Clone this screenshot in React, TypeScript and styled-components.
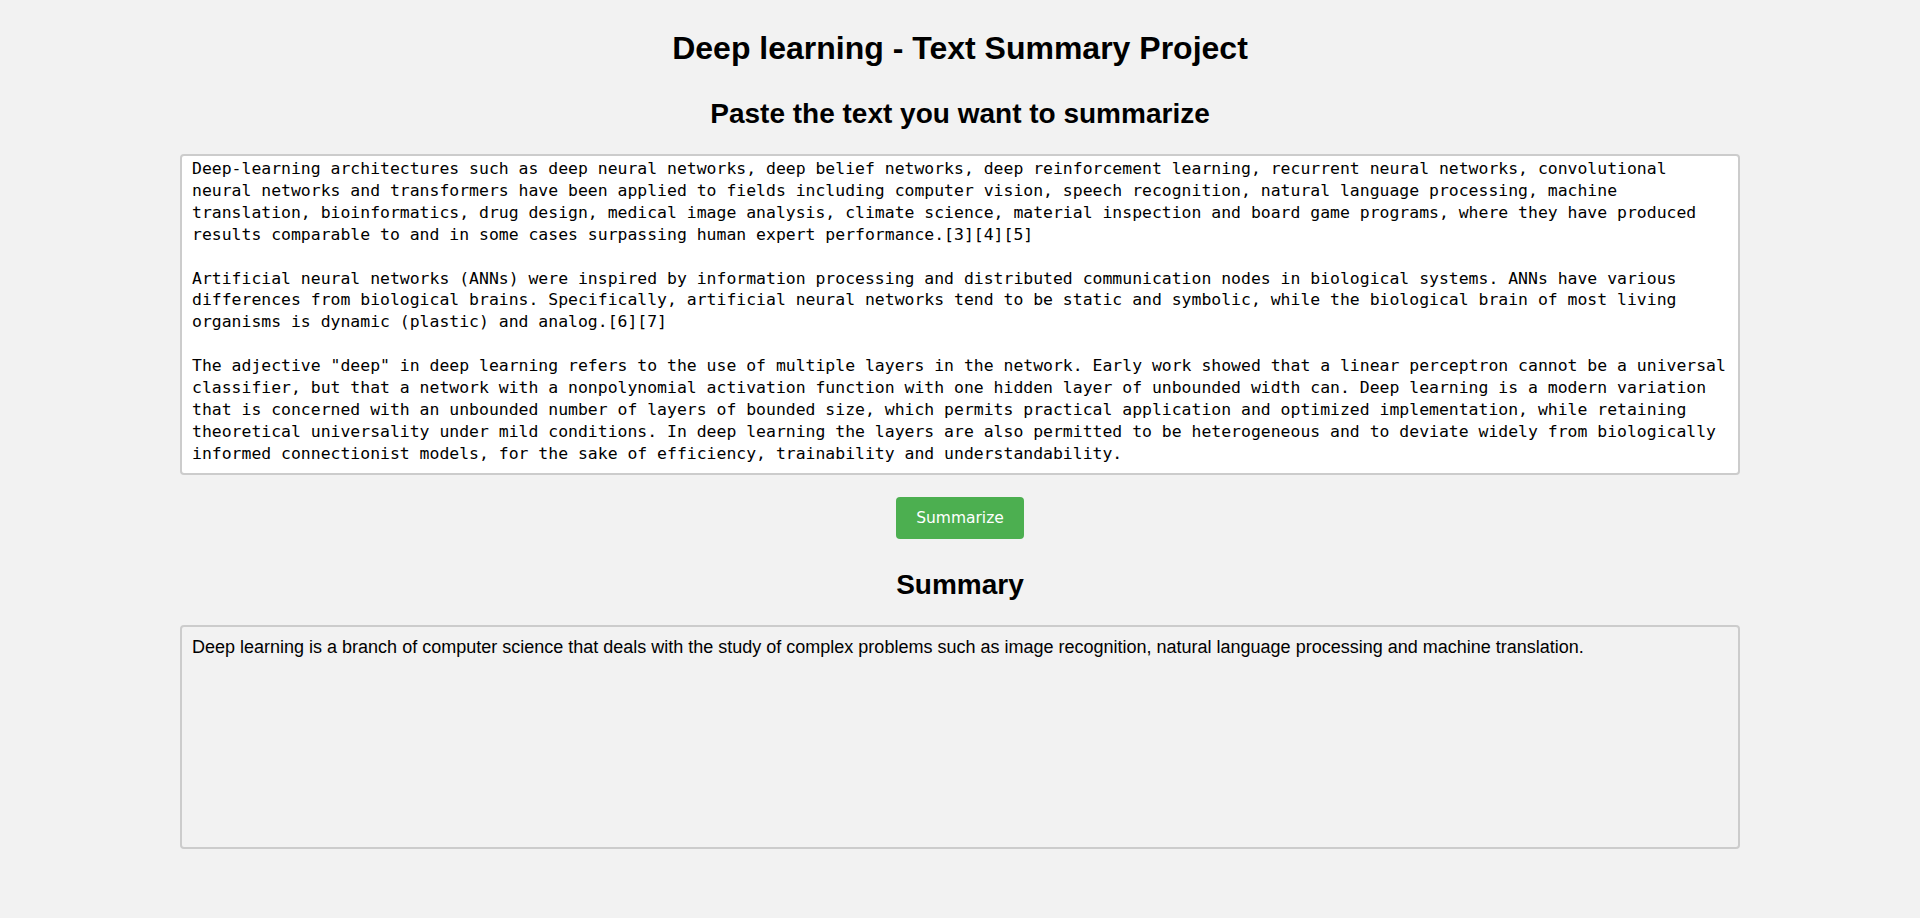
import React from "react";
import styled, { createGlobalStyle } from "styled-components";

const GlobalStyle = createGlobalStyle`
  html, body {
    margin: 0;
    padding: 0;
    background: #f2f2f2;
  }
  body {
    font-family: "Liberation Sans", Arial, sans-serif;
    color: #000;
  }
`;

const Page = styled.main`
  display: flex;
  flex-direction: column;
  align-items: center;
  width: 100%;
  padding-bottom: 70px;
`;

const Title = styled.h1`
  margin: 30px 0 0;
  font-size: 32px;
  line-height: 37px;
  font-weight: 700;
  text-align: center;
`;

const SectionTitle = styled.h2<{ $top: number }>`
  margin: ${(p) => p.$top}px 0 24px;
  font-size: 28px;
  line-height: 32px;
  font-weight: 700;
  text-align: center;
`;

const Box = styled.div`
  width: 80%;
  padding: 10px;
  border: 2px solid #cccccc;
  border-radius: 4px;
`;

const InputArea = styled.textarea`
  display: block;
  box-sizing: border-box;
  width: calc(80% + 24px);
  height: 321px;
  padding: 2px 11px 6px 10px;
  margin: 0;
  border: 2px solid #cccccc;
  border-radius: 4px;
  background: #ffffff;
  color: #000;
  font-family: "DejaVu Sans Mono", "Liberation Mono", monospace;
  font-size: 16.44px;
  line-height: 21.9px;
  resize: none;
  overflow: hidden;
  outline: none;
`;

const SummaryBox = styled(Box)`
  height: 200px;
  background: #f2f2f2;
  font-size: 18px;
  line-height: 20px;
  text-align: left;
`;

const Button = styled.button`
  margin-top: 22px;
  height: 42px;
  padding: 0 20px;
  border: none;
  border-radius: 4px;
  background: #4caf50;
  color: #ffffff;
  font-family: "DejaVu Sans", Verdana, sans-serif;
  font-size: 15.5px;
  cursor: pointer;
`;

const SOURCE = `Deep-learning architectures such as deep neural networks, deep belief networks, deep reinforcement learning, recurrent neural networks, convolutional neural networks and transformers have been applied to fields including computer vision, speech recognition, natural language processing, machine translation, bioinformatics, drug design, medical image analysis, climate science, material inspection and board game programs, where they have produced results comparable to and in some cases surpassing human expert performance.[3][4][5]

Artificial neural networks (ANNs) were inspired by information processing and distributed communication nodes in biological systems. ANNs have various differences from biological brains. Specifically, artificial neural networks tend to be static and symbolic, while the biological brain of most living organisms is dynamic (plastic) and analog.[6][7]

The adjective "deep" in deep learning refers to the use of multiple layers in the network. Early work showed that a linear perceptron cannot be a universal classifier, but that a network with a nonpolynomial activation function with one hidden layer of unbounded width can. Deep learning is a modern variation that is concerned with an unbounded number of layers of bounded size, which permits practical application and optimized implementation, while retaining theoretical universality under mild conditions. In deep learning the layers are also permitted to be heterogeneous and to deviate widely from biologically informed connectionist models, for the sake of efficiency, trainability and understandability.`;

const SUMMARY =
  "Deep learning is a branch of computer science that deals with the study of complex problems such as image recognition, natural language processing and machine translation.";

export default function App() {
  return (
    <>
      <GlobalStyle />
      <Page>
        <Title>Deep learning - Text Summary Project</Title>
        <SectionTitle $top={31}>Paste the text you want to summarize</SectionTitle>
        <InputArea defaultValue={SOURCE} spellCheck={false} />
        <Button type="button">Summarize</Button>
        <SectionTitle $top={30}>Summary</SectionTitle>
        <SummaryBox>{SUMMARY}</SummaryBox>
      </Page>
    </>
  );
}
